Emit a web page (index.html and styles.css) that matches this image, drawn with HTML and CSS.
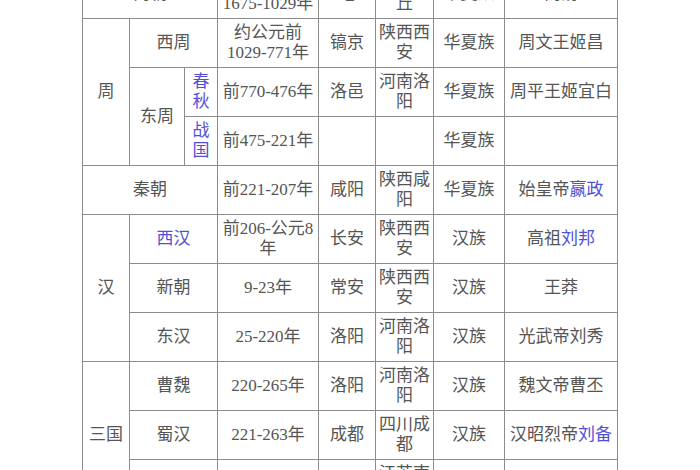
FILE: index.html
```html
<!DOCTYPE html>
<html lang="zh">
<head>
<meta charset="utf-8">
<title>朝代表</title>
<link rel="stylesheet" href="styles.css">
</head>
<body>
<table class="dyn">
  <colgroup>
    <col class="c1"><col class="c2"><col class="c3"><col class="c4"><col class="c5"><col class="c6"><col class="c7"><col class="c8">
  </colgroup>
  <tr><td colspan="3">商朝</td><td>约公元前<br>1675-1029年</td><td>亳</td><td>河南商丘</td><td>华夏族</td><td>商汤</td></tr>
  <tr><td rowspan="3">周</td><td colspan="2">西周</td><td>约公元前<br>1029-771年</td><td>镐京</td><td>陕西西安</td><td>华夏族</td><td>周文王姬昌</td></tr>
  <tr><td rowspan="2">东周</td><td class="link">春秋</td><td>前770-476年</td><td>洛邑</td><td>河南洛阳</td><td>华夏族</td><td>周平王姬宜白</td></tr>
  <tr><td class="link">战国</td><td>前475-221年</td><td></td><td></td><td>华夏族</td><td></td></tr>
  <tr><td colspan="3">秦朝</td><td>前221-207年</td><td>咸阳</td><td>陕西咸阳</td><td>华夏族</td><td>始皇帝<span class="link">嬴政</span></td></tr>
  <tr><td rowspan="3">汉</td><td colspan="2" class="link">西汉</td><td>前206-公元8<br>年</td><td>长安</td><td>陕西西安</td><td>汉族</td><td>高祖<span class="link">刘邦</span></td></tr>
  <tr><td colspan="2">新朝</td><td>9-23年</td><td>常安</td><td>陕西西安</td><td>汉族</td><td>王莽</td></tr>
  <tr><td colspan="2">东汉</td><td>25-220年</td><td>洛阳</td><td>河南洛阳</td><td>汉族</td><td>光武帝刘秀</td></tr>
  <tr><td rowspan="3">三国</td><td colspan="2">曹魏</td><td>220-265年</td><td>洛阳</td><td>河南洛阳</td><td>汉族</td><td>魏文帝曹丕</td></tr>
  <tr><td colspan="2">蜀汉</td><td>221-263年</td><td>成都</td><td>四川成都</td><td>汉族</td><td>汉昭烈帝<span class="link">刘备</span></td></tr>
  <tr><td colspan="2">东吴</td><td>222-280年</td><td>建业</td><td>江苏南京</td><td>汉族</td><td>吴大帝孙权</td></tr>
</table>
</body>
</html>
```
FILE: styles.css
```css
html, body {
  margin: 0;
  padding: 0;
  background: #ffffff;
  overflow: hidden;
}

.dyn {
  border-collapse: collapse;
  table-layout: fixed;
  width: 535px;
  margin: -31px auto 0;
  font-family: "Liberation Serif", "Noto Sans CJK SC", serif;
  font-size: 17px;
  line-height: 20px;
  color: #555555;
}

.dyn td {
  border: 1px solid #8c8c8c;
  height: 48px;
  padding: 0 3px;
  text-align: center;
  vertical-align: middle;
}

.c1 { width: 47px; }
.c2 { width: 55px; }
.c3 { width: 33px; }
.c4 { width: 101px; }
.c5 { width: 57px; }
.c6 { width: 58px; }
.c7 { width: 71px; }
.c8 { width: 113px; }

.link {
  color: #5050d6;
}
```
